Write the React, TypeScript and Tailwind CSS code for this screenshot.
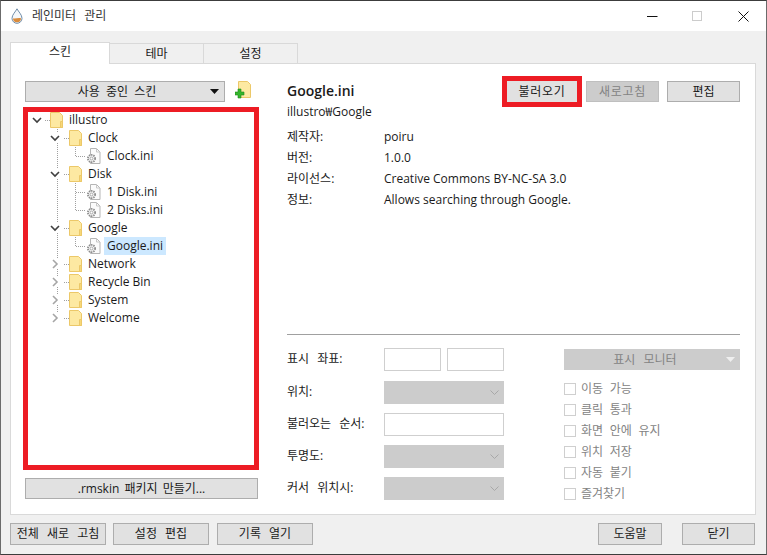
import type { ReactNode } from 'react'

type Node = {
  label: string
  depth: 0 | 1 | 2
  open?: boolean
  file?: boolean
  selected?: boolean
  more?: boolean
  last?: boolean
}

const tree: Node[] = [
  { label: 'illustro', depth: 0, open: true },
  { label: 'Clock', depth: 1, open: true },
  { label: 'Clock.ini', depth: 2, file: true },
  { label: 'Disk', depth: 1, open: true },
  { label: '1 Disk.ini', depth: 2, file: true, more: true },
  { label: '2 Disks.ini', depth: 2, file: true },
  { label: 'Google', depth: 1, open: true },
  { label: 'Google.ini', depth: 2, file: true, selected: true },
  { label: 'Network', depth: 1 },
  { label: 'Recycle Bin', depth: 1 },
  { label: 'System', depth: 1 },
  { label: 'Welcome', depth: 1, last: true },
]

const info = [
  ['제작자:', 'poiru'],
  ['버전:', '1.0.0'],
  ['라이선스:', 'Creative Commons BY-NC-SA 3.0'],
  ['정보:', 'Allows searching through Google.'],
]

const options = ['이동 가능', '클릭 통과', '화면 안에 유지', '위치 저장', '자동 붙기', '즐겨찾기']

function FolderIcon() {
  return (
    <svg width="13" height="16" viewBox="0 0 13 16" className="shrink-0">
      <path d="M.5.5h9l3 3v12H.5z" fill="#fde9a2" stroke="#ecc869" />
      <path d="M10.5 9.5h2v6h-2z" fill="#f7d878" stroke="#ecc869" />
    </svg>
  )
}

function IniIcon() {
  return (
    <svg width="15" height="16" viewBox="0 0 15 16" className="shrink-0">
      <path d="M4.5.5h6l3.5 3.5v11.5H4.5z" fill="#fbfbfb" stroke="#b5b5b5" />
      <path d="M10.5.5v3.5H14" fill="none" stroke="#c8c8c8" />
      <circle cx="5.5" cy="10.5" r="3.6" fill="#f2f2f2" stroke="#8d8d8d" strokeWidth="1.8" strokeDasharray="1.4 0.9" />
      <circle cx="5.5" cy="10.5" r="1.4" fill="#fff" stroke="#9a9a9a" strokeWidth="0.8" />
    </svg>
  )
}

// connector dots and the expander, drawn in the row's indent
function Guides({ node }: { node: Node }) {
  const width = node.depth === 0 ? 22 : node.depth === 1 ? 41 : 58
  const dots = { stroke: '#a0a0a0', strokeDasharray: '1 1', fill: 'none' }
  const cx = node.depth === 0 ? 9 : 27
  return (
    <svg width={width} height="18" className="shrink-0">
      {node.depth === 1 && (
        <>
          <path d="M29.5 0v4" {...dots} />
          {!node.last && <path d="M29.5 14v4" {...dots} />}
          <path d="M36 9.5h5" {...dots} />
          {node.open && <path d="M47.5 17v1" {...dots} />}
        </>
      )}
      {node.depth === 0 && <path d="M17 9.5h5" {...dots} />}
      {node.depth === 2 && (
        <>
          <path d="M29.5 0v18" {...dots} />
          <path d={node.more ? 'M47.5 0v18' : 'M47.5 0v9'} {...dots} />
          <path d="M48 9.5h10" {...dots} />
        </>
      )}
      {node.file ? null : node.open ? (
        <path d={`M${cx - 4} 7l4 4 4-4`} fill="none" stroke="#404040" strokeWidth="1.6" />
      ) : (
        <path d={`M${cx - 2} 5l4 4-4 4`} fill="none" stroke="#a6a6a6" strokeWidth="1.6" />
      )}
    </svg>
  )
}

function TreeRow({ node }: { node: Node }) {
  return (
    <div className="flex h-[18px] items-center [word-spacing:0]">
      <Guides node={node} />
      {node.file ? <IniIcon /> : <FolderIcon />}
      <span className={`ml-[3px] h-[18px] px-[3px] leading-[18px] ${node.selected ? 'bg-[#cce8ff]' : ''}`}>
        {node.label}
      </span>
    </div>
  )
}

function Btn({ children, className = '', disabled }: { children: ReactNode; className?: string; disabled?: boolean }) {
  return (
    <div
      className={`flex h-[21px] items-center justify-center border ${
        disabled ? 'border-[#bfbfbf] bg-[#cccccc] text-[#838383]' : 'border-[#adadad] bg-[#e1e1e1]'
      } ${className}`}
    >
      {children}
    </div>
  )
}

function Caret({ color }: { color: string }) {
  return (
    <svg width="9" height="5" viewBox="0 0 9 5">
      <path d="M0 0h9L4.5 5z" fill={color} />
    </svg>
  )
}

function FormRow({ label, children, className = '' }: { label: string; children: ReactNode; className?: string }) {
  return (
    <div className={`flex h-[23px] items-center ${className}`}>
      <span className="w-[97px] shrink-0 pb-[2px]">{label}</span>
      {children}
    </div>
  )
}

function DisabledSelect() {
  return (
    <div className="flex h-[23px] w-[120px] items-center justify-end bg-[#cccccc] pr-[5px]">
      <svg width="9" height="5" viewBox="0 0 9 5">
        <path d="M.5.5l4 4 4-4" fill="none" stroke="#a8a8a8" />
      </svg>
    </div>
  )
}

function TextField({ className }: { className: string }) {
  return <div className={`h-[23px] border border-[#cfcfcf] bg-white ${className}`} />
}

export default function App() {
  return (
    <div className="flex h-[555px] w-[767px] flex-col overflow-hidden border border-x-[#6b6b6b] border-t-[#3c3c3c] border-b-[#3c3c3c] bg-[#f0f0f0] font-['Open_Sans','Noto_Sans_CJK_KR',sans-serif] text-[12px] text-[#1a1a1a] [word-spacing:5px]">
      <div className="flex h-[30px] shrink-0 items-center bg-white pl-[10px]">
        <svg width="12" height="16" viewBox="0 0 12 16">
          <path d="M6 .8C4.5 3.8 1 6.8 1 10.3a5 5 0 0 0 10 0C11 6.8 7.5 3.8 6 .8z" fill="#f4f7fa" stroke="#6f8ca8" />
          <path d="M2 10.2c2 .9 5.5-.9 8 0a4 4 0 0 1-8 0z" fill="#d98b3c" />
        </svg>
        <span className="ml-[9px] text-[#333333]">레인미터 관리</span>
        <div className="ml-auto flex items-center">
          <svg width="11" height="11" viewBox="0 0 11 11" className="mr-[34px]">
            <path d="M0 5.5h10.5" stroke="#111" />
          </svg>
          <svg width="11" height="11" viewBox="0 0 11 11" className="mr-[35px]">
            <rect x=".5" y=".5" width="9" height="9" fill="none" stroke="#cccccc" />
          </svg>
          <svg width="11" height="11" viewBox="0 0 11 11" className="mr-[17px]">
            <path d="M.5.5l10 10M10.5.5l-10 10" stroke="#111" />
          </svg>
        </div>
      </div>

      <div className="flex flex-1 flex-col px-[9px]">
        <div className="mt-[10px] flex h-[22px] items-end">
          <div className="relative top-px flex h-[22px] w-[100px] items-center justify-center border border-b-0 border-[#d9d9d9] bg-white pb-[3px]">
            스킨
          </div>
          <div className="flex h-[20px] w-[94px] items-center justify-center border border-l-0 border-b-0 border-[#d9d9d9]">
            테마
          </div>
          <div className="flex h-[20px] w-[94px] items-center justify-center border border-l-0 border-b-0 border-[#d9d9d9]">
            설정
          </div>
        </div>

        <div className="flex h-[452px] w-[746px] border border-[#d9d9d9] bg-white">
          <div className="w-[276px] shrink-0 pl-[14px] pt-[17px]">
            <div className="flex h-[21px] items-center">
              <Btn className="relative w-[200px] pr-[16px] [word-spacing:3px]">
                사용 중인 스킨
                <span className="absolute right-[5px] top-[7px] flex">
                  <Caret color="#111" />
                </span>
              </Btn>
              <svg width="16" height="18" viewBox="0 0 16 18" className="-mt-[3px] ml-[10px]">
                <path d="M3.5.5h9l3 3v13h-12z" fill="#fde9a2" stroke="#ecc869" />
                <path d="M3 8h3v3h3v3H6v3H3v-3H0v-3h3z" fill="#35b52c" stroke="#1f8a1c" strokeWidth="0.6" />
              </svg>
            </div>
            <div className="-ml-[2px] mt-[5px] h-[363px] w-[236px] border-[5px] border-[#ed1c24]">
              <div className="-mt-px">
                {tree.map((node) => (
                  <TreeRow key={node.label} node={node} />
                ))}
              </div>
            </div>
            <Btn className="mt-[8px] w-[233px] [word-spacing:2px]">.rmskin 패키지 만들기...</Btn>
          </div>

          <div className="w-[453px] shrink-0 pt-[13px]">
            <div className="flex h-[29px] items-center">
              <span className="-mt-[2px] text-[14px] font-semibold">Google.ini</span>
              <div className="ml-auto flex items-center">
                <div className="border-[5px] border-[#ed1c24]">
                  <Btn className="h-[19px] w-[70px] !border-0 tracking-[0.75px]">불러오기</Btn>
                </div>
                <Btn disabled className="ml-[4px] w-[73px] tracking-[0.75px]">새로고침</Btn>
                <Btn className="ml-[8px] w-[73px]">편집</Btn>
              </div>
            </div>
            <div className="-mt-[5px] h-[25px] leading-[22px]">illustro₩Google</div>
            {info.map(([k, v]) => (
              <div key={k} className="flex h-[21px] items-center">
                <span className="w-[97px]">{k}</span>
                <span className="[word-spacing:0]">{v}</span>
              </div>
            ))}
            <div className="mt-[124px] h-px bg-[#a0a0a0]" />
            <div className="mt-[13px] flex">
              <div className="w-[217px]">
                <FormRow label="표시 좌표:" className="mb-[10px]">
                  <TextField className="w-[57px]" />
                  <TextField className="ml-[6px] w-[57px]" />
                </FormRow>
                <FormRow label="위치:" className="mb-[9px]">
                  <DisabledSelect />
                </FormRow>
                <FormRow label="불러오는 순서:" className="mb-[9px]">
                  <TextField className="w-[120px]" />
                </FormRow>
                <FormRow label="투명도:" className="mb-[9px]">
                  <DisabledSelect />
                </FormRow>
                <FormRow label="커서 위치시:">
                  <DisabledSelect />
                </FormRow>
              </div>
              <div className="ml-[60px] w-[177px] pt-px">
                <div className="relative flex h-[21px] items-center justify-center bg-[#cccccc] pr-[14px] text-[#838383]">
                  표시 모니터
                  <span className="absolute right-[5px] top-[8px] flex">
                    <Caret color="#efefef" />
                  </span>
                </div>
                <div className="mt-[8px] [word-spacing:3.5px]">
                  {options.map((o) => (
                    <div key={o} className="flex h-[21px] items-center text-[#838383]">
                      <span className="mr-[5px] h-[12px] w-[12px] border border-[#cfcfcf]" />
                      {o}
                    </div>
                  ))}
                </div>
              </div>
            </div>
          </div>
        </div>

        <div className="mt-[8px] flex w-[745px]">
          <Btn className="!h-[22px] w-[96px]">전체 새로 고침</Btn>
          <Btn className="ml-[7px] !h-[22px] w-[96px]">설정 편집</Btn>
          <Btn className="ml-[8px] !h-[22px] w-[96px]">기록 열기</Btn>
          <Btn className="ml-auto !h-[22px] w-[64px]">도움말</Btn>
          <Btn className="ml-[20px] !h-[22px] w-[73px]">닫기</Btn>
        </div>
      </div>
    </div>
  )
}
